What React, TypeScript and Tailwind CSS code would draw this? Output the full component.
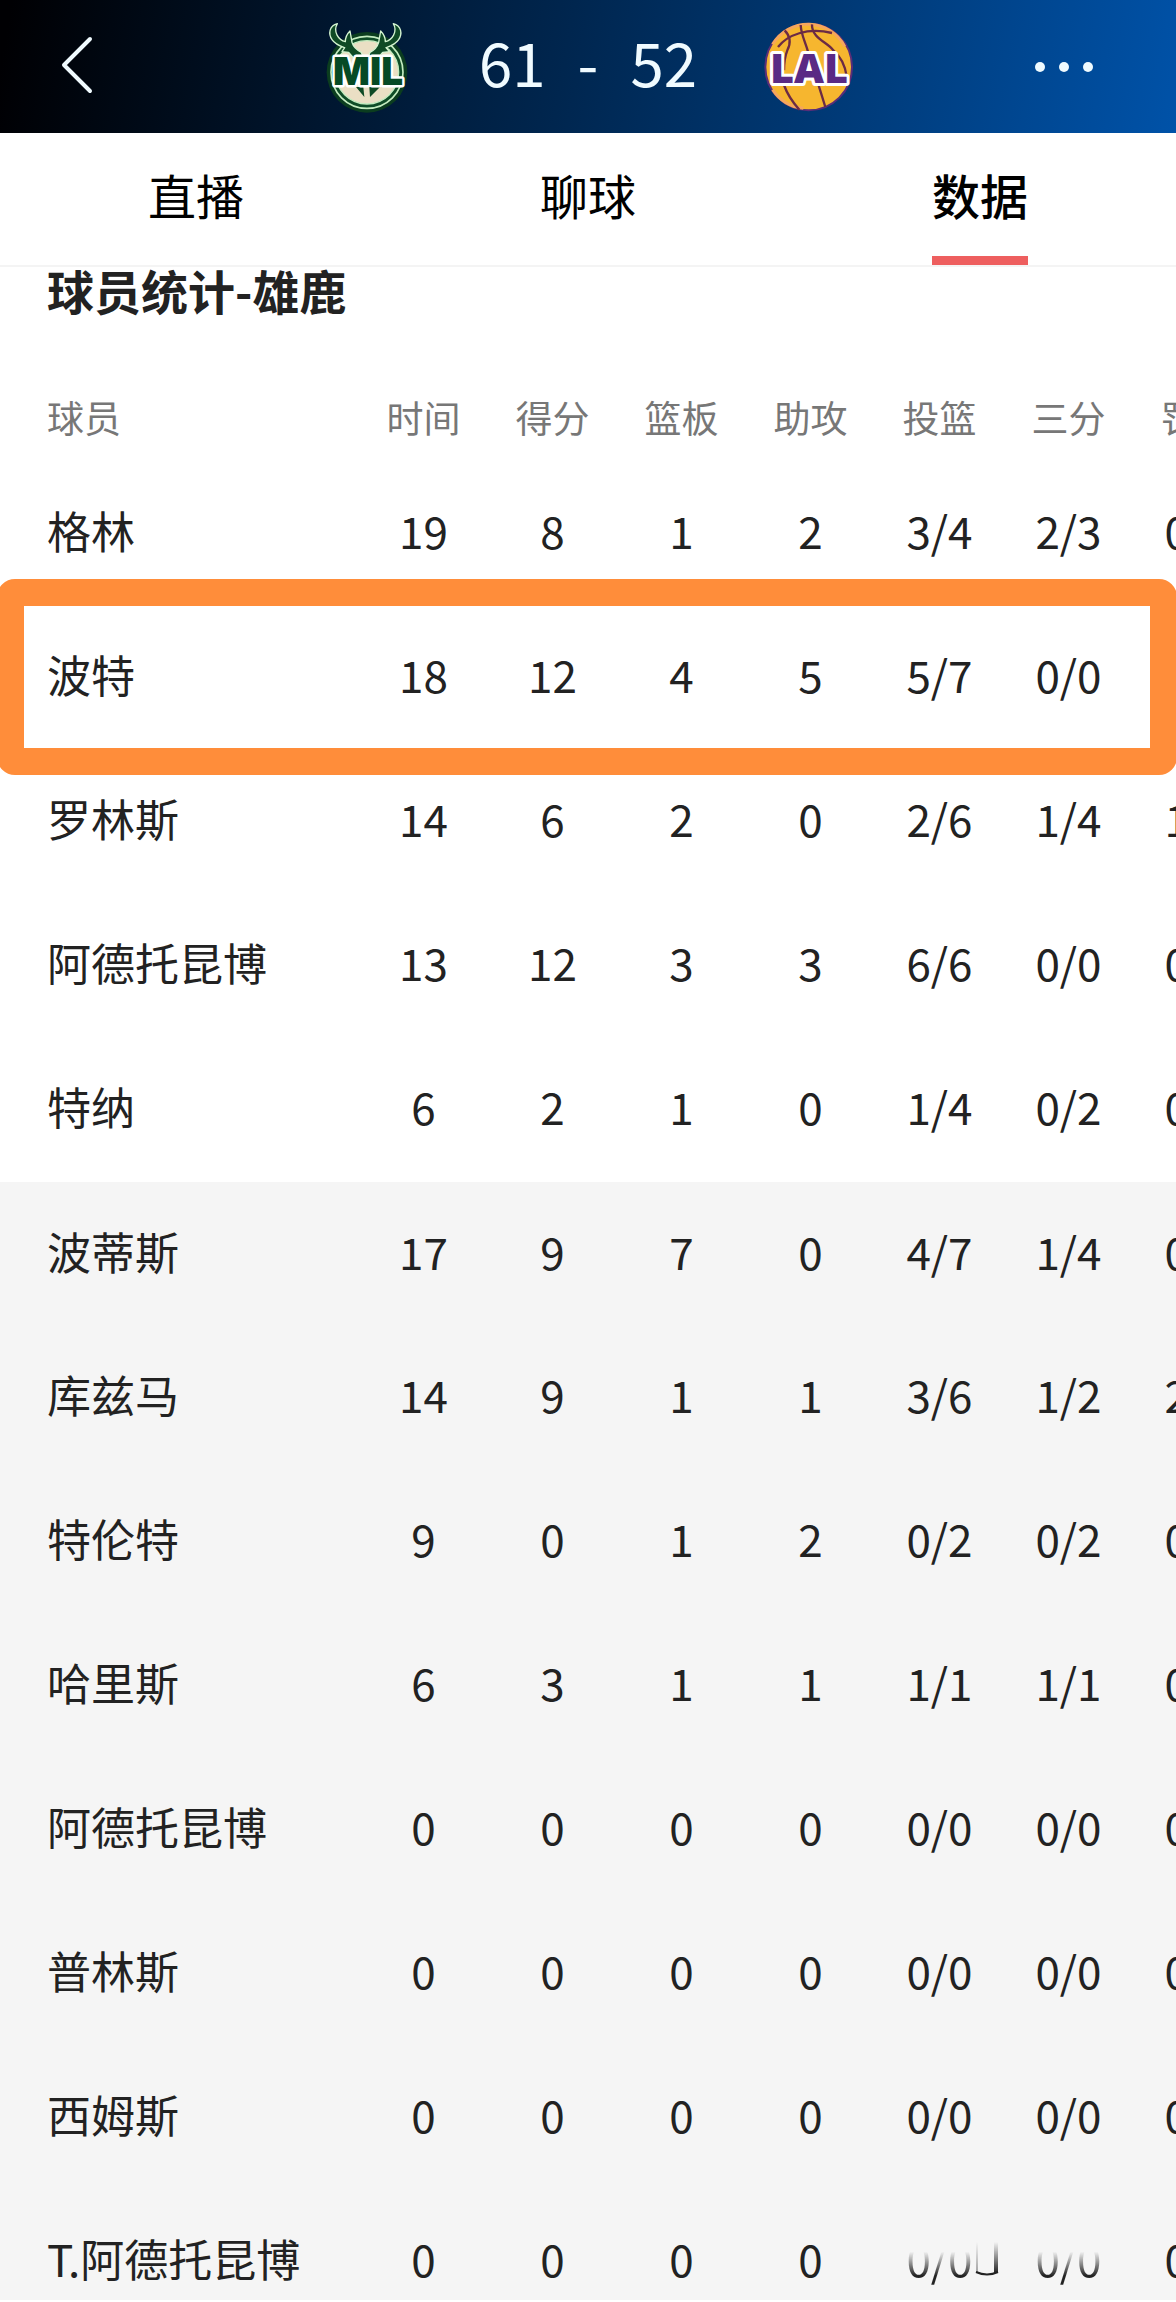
import { FC } from 'react';

const TABS = ['直播', '聊球', '数据'];

const COLUMNS = ['时间', '得分', '篮板', '助攻', '投篮', '三分', '罚球'];

interface IPlayer {
  name: string;
  stats: string[];
  highlighted?: boolean;
  fading?: boolean;
}

const STARTERS: IPlayer[] = [
  { name: '格林', stats: ['19', '8', '1', '2', '3/4', '2/3', '0/0'] },
  {
    name: '波特',
    stats: ['18', '12', '4', '5', '5/7', '0/0', '0/0'],
    highlighted: true,
  },
  { name: '罗林斯', stats: ['14', '6', '2', '0', '2/6', '1/4', '1/1'] },
  { name: '阿德托昆博', stats: ['13', '12', '3', '3', '6/6', '0/0', '0/0'] },
  { name: '特纳', stats: ['6', '2', '1', '0', '1/4', '0/2', '0/0'] },
];

const BENCH: IPlayer[] = [
  { name: '波蒂斯', stats: ['17', '9', '7', '0', '4/7', '1/4', '0/0'] },
  { name: '库兹马', stats: ['14', '9', '1', '1', '3/6', '1/2', '2/2'] },
  { name: '特伦特', stats: ['9', '0', '1', '2', '0/2', '0/2', '0/0'] },
  { name: '哈里斯', stats: ['6', '3', '1', '1', '1/1', '1/1', '0/0'] },
  { name: '阿德托昆博', stats: ['0', '0', '0', '0', '0/0', '0/0', '0/0'] },
  { name: '普林斯', stats: ['0', '0', '0', '0', '0/0', '0/0', '0/0'] },
  { name: '西姆斯', stats: ['0', '0', '0', '0', '0/0', '0/0', '0/0'] },
  {
    name: 'T.阿德托昆博',
    stats: ['0', '0', '0', '0', '0/0', '0/0', '0/0'],
    fading: true,
  },
];

const BucksLogo: FC = () => (
  <svg viewBox="30 30 276 276" className="size-[92px]" role="img" aria-label="MIL">
    <circle cx="171" cy="184" r="121" fill="#0b3d1f" />
    <circle cx="171" cy="184" r="108" fill="#0f4d27" stroke="#c3ecc0" strokeWidth="5" />
    <circle cx="171" cy="184" r="95" fill="#eadfc4" stroke="#c3ecc0" strokeWidth="4" />
    <g fill="#0f4a25" stroke="#d3f3d0" strokeWidth="4" strokeLinejoin="round">
      <path d="M82 38C58 44 54 68 66 86C76 101 92 106 104 110L96 122L116 124L128 138L160 140L154 124C142 118 130 108 126 94L120 60C110 70 106 82 106 92C86 88 68 62 82 38Z" />
      <path d="M250 38C274 44 278 68 266 86C256 101 240 106 228 110L238 122L218 124L206 138L174 140L180 124C192 118 202 108 206 94L212 60C222 70 226 82 226 92C246 88 264 62 250 38Z" />
    </g>
    <path d="M138 228L163 258L160 228ZM178 228L180 258L210 228Z" fill="#0f4a25" />
    <text
      x="174"
      y="222"
      textAnchor="middle"
      className="fill-[#064a25] stroke-white font-['Inter',sans-serif] text-[116px] font-black [paint-order:stroke]"
      strokeWidth="15"
      strokeLinejoin="round"
    >
      MIL
    </text>
  </svg>
);

const LakersLogo: FC = () => (
  <svg viewBox="42 30 276 276" className="size-[92px]" role="img" aria-label="LAL">
    <circle cx="176" cy="168" r="130" fill="#f6b62f" stroke="#5a2d78" strokeWidth="6" />
    <path
      d="M68 100A124 124 0 0 1 284 106M68 236A124 124 0 0 0 160 292"
      fill="none"
      stroke="#f5a65c"
      strokeWidth="9"
    />
    <g fill="none" stroke="#6b2b45" strokeWidth="7">
      <path d="M84 108C112 72 172 48 246 66" />
      <path d="M104 58C122 76 124 94 112 118C104 138 102 158 102 178M102 222C112 250 130 276 148 296" />
      <path d="M152 42C154 74 166 92 174 122M205 220L226 288" />
      <path d="M186 40C184 80 232 94 248 116C274 138 286 168 290 196" />
    </g>
    <text
      x="177"
      y="216"
      textAnchor="middle"
      className="fill-[#5a2a84] stroke-white font-['Open_Sans',sans-serif] text-[124px] font-extrabold [paint-order:stroke]"
      strokeWidth="18"
      strokeLinejoin="round"
    >
      LAL
    </text>
  </svg>
);

const Smudge: FC = () => (
  <svg
    viewBox="0 0 44 36"
    className="pointer-events-none absolute top-1 left-full h-9 w-11"
    fill="none"
    aria-hidden="true"
  >
    <defs>
      <linearGradient id="smudge" x1="0" y1="0" x2="0" y2="1">
        <stop offset="0" stopColor="#222" stopOpacity="0" />
        <stop offset="1" stopColor="#222" />
      </linearGradient>
    </defs>
    <path d="M3 2h2v31H3Z" fill="url(#smudge)" opacity="0.4" />
    <path d="M21 2h4v31H21Z" fill="url(#smudge)" />
    <path d="M3 32Q14 37 25 32" stroke="#222" strokeWidth="2" />
  </svg>
);

const Header: FC = () => (
  <header className="grid h-[133px] shrink-0 grid-cols-[1fr_auto_1fr] items-center bg-linear-[100deg] from-[#000003] from-1% via-[#00264f] via-48% to-[#0052a8] text-[#f0fbff]">
    <button type="button" aria-label="返回" className="justify-self-start pb-1 pl-[59px]">
      <svg viewBox="0 0 36 60" className="h-[60px] w-9" fill="none">
        <path
          d="M31 4L5 30L31 56"
          stroke="currentColor"
          strokeWidth="4"
          strokeLinecap="round"
          strokeLinejoin="round"
        />
      </svg>
    </button>
    <div className="flex items-center gap-[67px]">
      <BucksLogo />
      <div className="flex items-center gap-8 pb-3 text-[60px] leading-none">
        <span>61</span>
        <span>-</span>
        <span>52</span>
      </div>
      <LakersLogo />
    </div>
    <button type="button" aria-label="更多" className="justify-self-end pr-20">
      <svg viewBox="0 0 64 20" className="h-5 w-16" fill="currentColor">
        <circle cx="8" cy="10" r="5" />
        <circle cx="32" cy="10" r="5" />
        <circle cx="56" cy="10" r="5" />
      </svg>
    </button>
  </header>
);

const TabBar: FC<{ active: string }> = ({ active }) => (
  <nav className="flex shrink-0 border-b-2 border-[#f4f4f4]">
    {TABS.map((tab) => (
      <div key={tab} className="flex flex-1 justify-center">
        <button
          type="button"
          className={`h-[132px] border-b-[9px] pb-0.5 text-[48px] leading-[72px] text-black ${
            tab === active ? 'border-[#ee5f5f] font-medium' : 'border-transparent'
          }`}
        >
          {tab}
        </button>
      </div>
    ))}
  </nav>
);

const PlayerRow: FC<{ player: IPlayer }> = ({ player }) => (
  <tr className="relative h-36">
    <th scope="row" className="pb-1.5 pl-[47px] text-left font-normal whitespace-nowrap">
      {player.name}
      {player.highlighted && (
        <span className="pointer-events-none absolute -inset-y-[26px] -left-[3px] z-10 w-[calc(100vw+4px)] rounded-[18px] border-[27px] border-[#ff8d3a]" />
      )}
    </th>
    {player.stats.map((stat, index) => (
      <td key={index} className="pb-1.5 text-center">
        {player.fading && (index === 4 || index === 5) ? (
          <span className="relative inline-block">
            <span className="bg-linear-to-b from-transparent from-40% to-[#222] to-78% bg-clip-text text-transparent">
              {stat}
            </span>
            {index === 4 && <Smudge />}
          </span>
        ) : (
          stat
        )}
      </td>
    ))}
  </tr>
);

const StatsTable: FC = () => (
  <table className="w-[1262px] table-fixed border-collapse text-[44px] leading-none text-[#222]">
    <colgroup>
      <col className="w-[359px]" />
      {COLUMNS.map((column) => (
        <col key={column} className="w-[129px]" />
      ))}
    </colgroup>
    <thead>
      <tr className="h-[86px] text-[37px] text-[#777]">
        <th scope="col" className="pb-0.5 pl-[47px] text-left font-normal">
          球员
        </th>
        {COLUMNS.map((column) => (
          <th key={column} scope="col" className="pb-0.5 font-normal whitespace-nowrap">
            {column}
          </th>
        ))}
      </tr>
    </thead>
    <tbody className="border-b-2 border-white">
      {STARTERS.map((player, index) => (
        <PlayerRow key={index} player={player} />
      ))}
    </tbody>
    <tbody className="bg-[#f5f5f5]">
      {BENCH.map((player, index) => (
        <PlayerRow key={index} player={player} />
      ))}
    </tbody>
  </table>
);

export default function App() {
  return (
    <div className="flex h-screen flex-col bg-white pb-0.5 font-['Noto_Sans_CJK_SC',sans-serif]">
      <Header />
      <TabBar active="数据" />
      <main className="min-h-0 flex-1 overflow-auto [scrollbar-width:none]">
        <h1 className="mb-[62px] pl-[47px] text-[47px] leading-[46px] font-bold text-[#222]">
          球员统计-雄鹿
        </h1>
        <StatsTable />
      </main>
    </div>
  );
}
